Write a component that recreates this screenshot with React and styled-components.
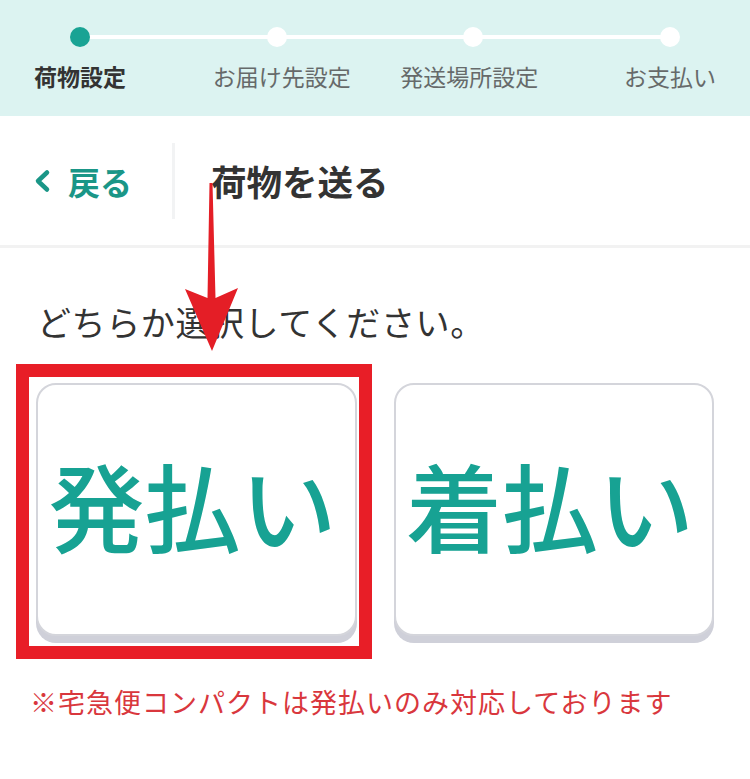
import React from "react";
import styled, { createGlobalStyle } from "styled-components";

const Global = createGlobalStyle`
  html, body { margin: 0; padding: 0; background: #fff; }
  body { font-family: "Noto Sans CJK JP", "Noto Sans", sans-serif; }
  * { box-sizing: border-box; }
`;

const Page = styled.div`
  position: relative;
  width: 750px;
  min-height: 779px;
  background: #fff;
`;

const StepBand = styled.div`
  height: 116px;
  background: #dcf3f1;
  padding: 27px 80px 0;
`;

const StepTrack = styled.div`
  position: relative;
  display: flex;
  justify-content: space-between;
  &::before {
    content: "";
    position: absolute;
    left: 0;
    right: 0;
    top: 8px;
    height: 4px;
    background: #fff;
  }
`;

const Step = styled.div`
  width: 0;
  display: flex;
  flex-direction: column;
  align-items: center;
`;

const Dot = styled.span`
  position: relative;
  width: 20px;
  height: 20px;
  flex: none;
  border-radius: 50%;
  background: ${(p) => (p.$active ? "#19a394" : "#fff")};
`;

const StepLabel = styled.span`
  margin-top: 18px;
  white-space: nowrap;
  font-size: 23px;
  line-height: 1;
  font-weight: ${(p) => (p.$active ? 700 : 400)};
  color: ${(p) => (p.$active ? "#333" : "#666a6a")};
  transform: translateX(${(p) => p.$shift || 0}px);
`;

const Header = styled.div`
  height: 132px;
  display: flex;
  align-items: center;
  border-bottom: 3px solid #f2f2f2;
`;

const Back = styled.div`
  display: flex;
  align-items: center;
  gap: 17px;
  padding-left: 34px;
  width: 172px;
  color: #1a9687;
  font-size: 32px;
  font-weight: 700;
  line-height: 1;
`;

const VDivider = styled.div`
  width: 3px;
  height: 76px;
  background: #f2f3f4;
`;

const Title = styled.h1`
  margin: 0 0 0 36px;
  font-size: 35.5px;
  font-weight: 700;
  line-height: 1;
  color: #333;
`;

const Main = styled.div`
  padding: 57px 36px 0;
`;

const Prompt = styled.p`
  margin: 0 0 0 1px;
  font-size: 34px;
  letter-spacing: 0.6px;
  line-height: 1;
  color: #333;
  font-weight: 400;
`;

const Cards = styled.div`
  margin-top: 44px;
  display: grid;
  grid-template-columns: 321px 320px;
  gap: 37px;
`;

const Card = styled.button`
  height: 253px;
  border: 2px solid #d4d5db;
  border-radius: 20px;
  background: #fff;
  box-shadow: 0 7px 0 #cfd0d9;
  display: flex;
  align-items: center;
  justify-content: center;
  font-family: inherit;
  font-size: 96px;
  font-weight: 500;
  color: #17a293;
  line-height: 1;
  padding: 0 8px 12px 0;
  white-space: nowrap;
  cursor: pointer;
`;

const Note = styled.p`
  margin: 52px 0 0 -6px;
  font-size: 27px;
  line-height: 1;
  color: #d9373d;
  letter-spacing: 1px;
`;

const Highlight = styled.div`
  position: absolute;
  left: 16px;
  top: 364px;
  width: 356px;
  height: 295px;
  border: 13px solid #e81e27;
  pointer-events: none;
`;

const ArrowSvg = styled.svg`
  position: absolute;
  left: 180px;
  top: 180px;
  width: 64px;
  height: 175px;
  pointer-events: none;
`;

const Chevron = () => (
  <svg width="17" height="24" viewBox="0 0 17 24">
    <polyline points="13,3.5 4,12 13,20.5" fill="none" stroke="#1a9687" strokeWidth="4.5" strokeLinecap="round" strokeLinejoin="round" />
  </svg>
);

const steps = [
  { label: "荷物設定", active: true },
  { label: "お届け先設定", shift: 5 },
  { label: "発送場所設定", shift: -4 },
  { label: "お支払い" },
];

export default function App() {
  return (
    <Page>
      <Global />
      <StepBand>
        <StepTrack>
          {steps.map((s) => (
            <Step key={s.label}>
              <Dot $active={s.active} />
              <StepLabel $active={s.active} $shift={s.shift}>{s.label}</StepLabel>
            </Step>
          ))}
        </StepTrack>
      </StepBand>
      <Header>
        <Back>
          <Chevron />
          <span>戻る</span>
        </Back>
        <VDivider />
        <Title>荷物を送る</Title>
      </Header>
      <Main>
        <Prompt>どちらか選択してください。</Prompt>
        <Cards>
          <Card>発払い</Card>
          <Card>着払い</Card>
        </Cards>
        <Note>※宅急便コンパクトは発払いのみ対応しております</Note>
      </Main>
      <Highlight />
      <ArrowSvg viewBox="180 180 64 175">
        <polygon points="209.5,183 212.5,183 215.5,298 238,288 212,351 185,289 207.5,298" fill="#e41e26" />
      </ArrowSvg>
    </Page>
  );
}
